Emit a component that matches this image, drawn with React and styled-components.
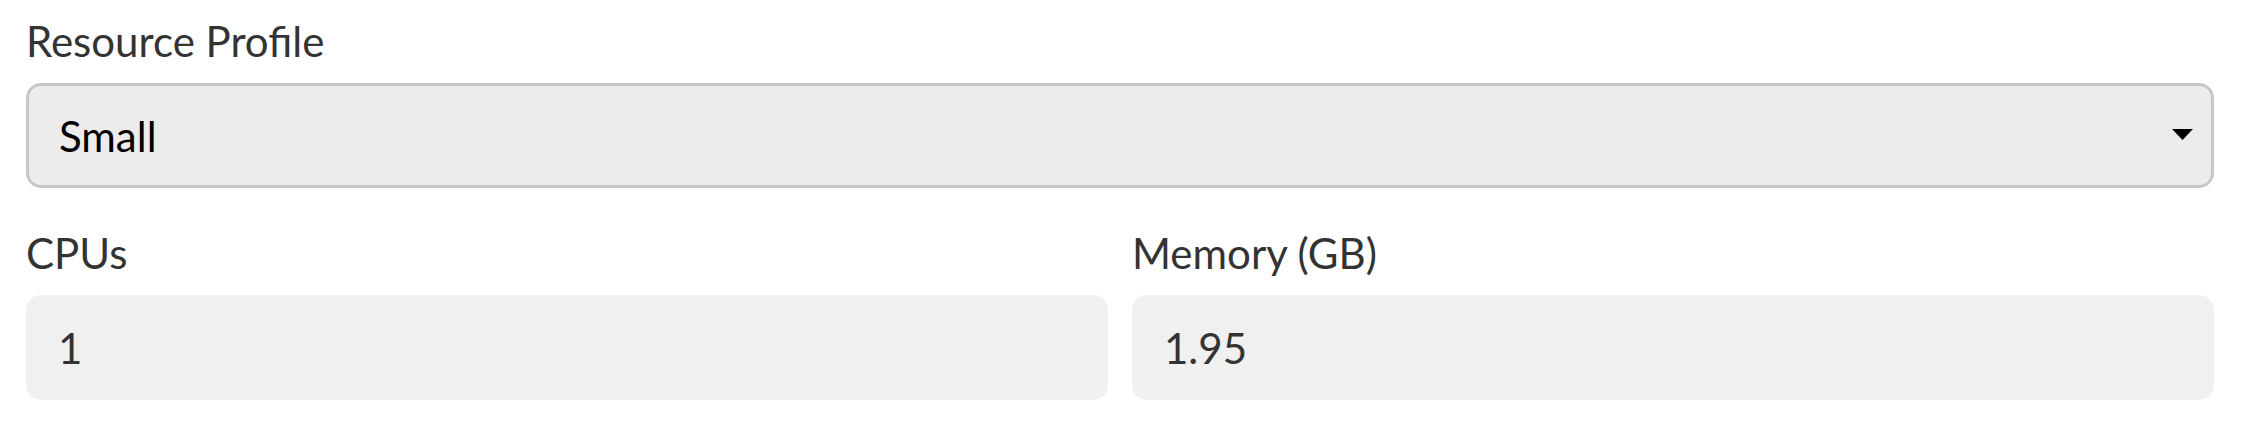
import styled, { createGlobalStyle } from "styled-components";

const Global = createGlobalStyle`
  body {
    margin: 0;
    background: #fff;
    font-family: Lato, "Open Sans", sans-serif;
  }
`;

export default function App() {
  return (
    <>
      <Global />
      <Form>
        <Field>
          <Label>Resource Profile</Label>
          <SelectBox>
            <Select defaultValue="small">
              <option value="small">Small</option>
              <option value="medium">Medium</option>
              <option value="large">Large</option>
            </Select>
            <Arrow width="21" height="11" viewBox="0 0 21 11">
              <path d="M0 0h21L10.5 11z" fill="#000" />
            </Arrow>
          </SelectBox>
        </Field>
        <Row>
          <Field>
            <Label>CPUs</Label>
            <Input defaultValue="1" />
          </Field>
          <Field>
            <Label>Memory (GB)</Label>
            <Input defaultValue="1.95" />
          </Field>
        </Row>
      </Form>
    </>
  );
}

const Form = styled.div`
  width: 2188px;
  padding: 16px 0 0 26px;
  display: flex;
  flex-direction: column;
  gap: 40px;
`;

const Row = styled.div`
  display: grid;
  grid-template-columns: 1fr 1fr;
  gap: 24px;
`;

const Field = styled.div`
  display: flex;
  flex-direction: column;
  gap: 17px;
`;

const Label = styled.label`
  font-size: 42px;
  line-height: 50px;
  color: #333;
`;

const SelectBox = styled.div`
  height: 105px;
  box-sizing: border-box;
  border: 3px solid #c7c7c7;
  border-radius: 15px;
  background: #ececec;
  display: flex;
  align-items: center;
  padding: 0 18px 0 30px;
`;

const Select = styled.select`
  appearance: none;
  flex: 1;
  border: none;
  background: transparent;
  font-family: inherit;
  font-size: 42px;
  line-height: 50px;
  color: #000;
  padding: 0;
  outline: none;
`;

const Arrow = styled.svg`
  flex: none;
  margin-top: -2px;
`;

const Input = styled.input`
  height: 105px;
  box-sizing: border-box;
  border: none;
  border-radius: 15px;
  background: #f0f0f0;
  padding: 0 32px;
  font-family: inherit;
  font-size: 42px;
  color: #333;
  outline: none;
  width: 100%;
`;
